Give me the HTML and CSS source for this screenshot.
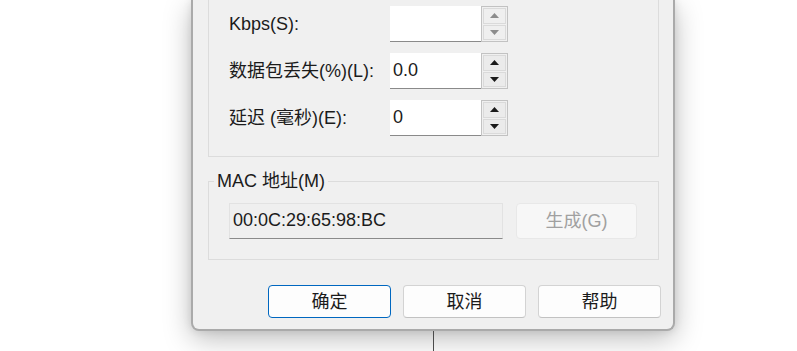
FILE: index.html
```html
<!DOCTYPE html>
<html lang="zh-CN">
<head>
  <meta charset="UTF-8">
  <meta name="viewport" content="width=device-width, initial-scale=1.0">
  <title>网络适配器高级设置</title>
  <link rel="stylesheet" href="styles.css">
</head>
<body>
  <div class="page">
    <div class="dialog">
      <div class="group group-open">
        <div class="row">
          <span class="label">Kbps(S):</span>
          <div class="spin disabled">
            <div class="spin-field"></div>
            <div class="spin-buttons">
              <div class="spin-btn"><svg width="9" height="5" viewBox="0 0 9 5"><path d="M0 5L4.5 0L9 5Z"/></svg></div>
              <div class="spin-btn"><svg width="9" height="5" viewBox="0 0 9 5"><path d="M0 0L4.5 5L9 0Z"/></svg></div>
            </div>
          </div>
        </div>
        <div class="row">
          <span class="label">数据包丢失(%)(L):</span>
          <div class="spin">
            <div class="spin-field">0.0</div>
            <div class="spin-buttons">
              <div class="spin-btn"><svg width="9" height="5" viewBox="0 0 9 5"><path d="M0 5L4.5 0L9 5Z"/></svg></div>
              <div class="spin-btn"><svg width="9" height="5" viewBox="0 0 9 5"><path d="M0 0L4.5 5L9 0Z"/></svg></div>
            </div>
          </div>
        </div>
        <div class="row">
          <span class="label">延迟 (毫秒)(E):</span>
          <div class="spin">
            <div class="spin-field">0</div>
            <div class="spin-buttons">
              <div class="spin-btn"><svg width="9" height="5" viewBox="0 0 9 5"><path d="M0 5L4.5 0L9 5Z"/></svg></div>
              <div class="spin-btn"><svg width="9" height="5" viewBox="0 0 9 5"><path d="M0 0L4.5 5L9 0Z"/></svg></div>
            </div>
          </div>
        </div>
      </div>

      <fieldset class="group mac-group">
        <legend>MAC 地址(M)</legend>
        <div class="mac-row">
          <div class="mac-field">00:0C:29:65:98:BC</div>
          <button class="btn btn-disabled" disabled>生成(G)</button>
        </div>
      </fieldset>

      <div class="actions">
        <button class="btn btn-default">确定</button>
        <button class="btn">取消</button>
        <button class="btn">帮助</button>
      </div>
    </div>
    <div class="connector"></div>
  </div>
</body>
</html>
```

FILE: styles.css
```css
/* janela de diálogo estilo Windows 11 */
* {
  margin: 0;
  padding: 0;
  box-sizing: border-box;
}

body {
  background-color: #fff;
  font-family: "Liberation Sans", "Noto Sans CJK SC", sans-serif;
  font-size: 18px;
  line-height: 22px;
  color: #1b1b1b;
}

.page {
  height: 351px;
  overflow: hidden;
}

.dialog {
  width: 484px;
  margin-left: 191px;
  padding: 0 14px 11px 15px;
  background-color: #f0f0f0;
  border: 2px solid #aaaaaa;
  border-top: none;
  border-radius: 0 0 8px 8px;
  box-shadow: 0 8px 28px rgba(0, 0, 0, 0.26), 0 0 8px rgba(0, 0, 0, 0.1);
}

.group {
  border: 1px solid #dcdcdc;
}

.group-open {
  border-top: none;
  padding: 6px 0 20px 20px;
  display: flex;
  flex-direction: column;
  gap: 11px;
}

.row {
  display: grid;
  grid-template-columns: 161px auto;
  align-items: center;
  height: 36px;
}

.spin {
  display: flex;
  height: 36px;
}

.spin-field {
  width: 91px;
  height: 36px;
  background-color: #fff;
  border-bottom: 1px solid #8a8a8a;
  padding: 6px 0 0 3px;
}

.spin-buttons {
  width: 27px;
  height: 36px;
  border: 1px solid #c2c2c2;
  padding: 1px;
  display: flex;
  flex-direction: column;
  gap: 1px;
  background-color: #f0f0f0;
}

.spin-btn {
  flex: 1;
  border: 1px solid #dadada;
  background-color: #ebebeb;
  display: flex;
  align-items: center;
  justify-content: center;
}

.spin-btn svg {
  fill: #1a1a1a;
}

.spin.disabled .spin-btn svg {
  fill: #8c8c8c;
}

.spin.disabled .spin-btn {
  background-color: #efefef;
}

.mac-group {
  margin-top: 13px;
  padding: 11px 0 20px 20px;
  min-width: 0;
}

.mac-group legend {
  margin-left: -15px;
  padding: 0 3px;
  line-height: 22px;
}

.mac-row {
  display: flex;
  gap: 13px;
}

.mac-field {
  width: 274px;
  height: 36px;
  background-color: #efefef;
  border: 1px solid #e2e2e2;
  border-bottom: 1px solid #8a8a8a;
  padding: 5px 0 0 3px;
}

.btn {
  font-family: inherit;
  font-size: 18px;
  line-height: 22px;
  color: #1b1b1b;
  width: 123px;
  height: 33px;
  background-color: #fdfdfd;
  border: 1px solid #d3d3d3;
  border-bottom-color: #c2c2c2;
  border-radius: 4px;
}

.btn-disabled {
  width: 121px;
  height: 36px;
  color: #a0a0a0;
  background-color: #f7f7f7;
  border: 1px solid #e8e8e8;
}

.btn-default {
  border: 1px solid #0067c0;
}

.actions {
  display: flex;
  justify-content: flex-end;
  gap: 12px;
  margin-top: 25px;
  margin-right: -2px;
}

.connector {
  width: 1px;
  height: 20px;
  margin-left: 433px;
  background-color: #4a4a4a;
}
```
